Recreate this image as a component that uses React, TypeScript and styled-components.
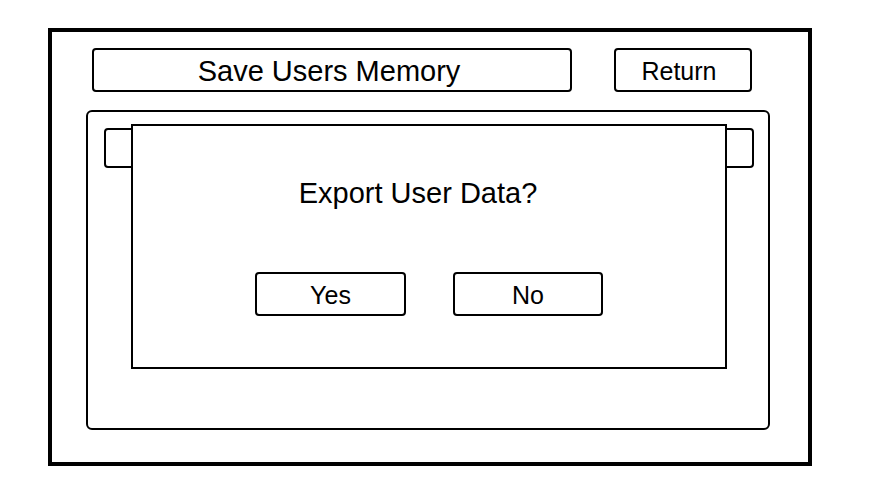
import React from "react"
import styled, { createGlobalStyle } from "styled-components"

const GlobalStyle = createGlobalStyle`
  body {
    margin: 0;
    background: #ffffff;
    font-family: "Liberation Sans", Arial, sans-serif;
    color: #000000;
  }
`

export default function App() {
  return (
    <>
      <GlobalStyle />
      <StyledFrame>
        <StyledHeader>
          <StyledTitleBox>Save Users Memory</StyledTitleBox>
          <StyledButton $width={138} $shift={8}>Return</StyledButton>
        </StyledHeader>
        <StyledPanel>
          <StyledTabRow>
            <StyledTab />
            <StyledTab />
          </StyledTabRow>
          <StyledDialog>
            <StyledQuestion>Export User Data?</StyledQuestion>
            <StyledActions>
              <StyledButton $width={151}>Yes</StyledButton>
              <StyledButton $width={150}>No</StyledButton>
            </StyledActions>
          </StyledDialog>
        </StyledPanel>
      </StyledFrame>
    </>
  )
}

const StyledFrame = styled.div`
  box-sizing: border-box;
  margin: 28px 0 0 48px;
  width: 764px;
  height: 438px;
  border: 4px solid #000;
  padding: 16px 38px 0 34px;
  display: flex;
  flex-direction: column;
  gap: 18px;
`

const StyledHeader = styled.div`
  display: flex;
  align-items: center;
  gap: 42px;
  padding-left: 6px;
`

const StyledTitleBox = styled.div`
  box-sizing: border-box;
  width: 480px;
  height: 44px;
  border: 2px solid #000;
  border-radius: 4px;
  display: flex;
  align-items: center;
  justify-content: center;
  padding-top: 3px;
  padding-right: 6px;
  font-size: 29px;
`

const StyledButton = styled.div<{ $width: number; $shift?: number }>`
  box-sizing: border-box;
  width: ${(p) => p.$width}px;
  height: 44px;
  border: 2px solid #000;
  border-radius: 4px;
  display: flex;
  align-items: center;
  justify-content: center;
  padding-top: 2px;
  padding-right: ${(p) => p.$shift ?? 0}px;
  font-size: 25px;
`

const StyledPanel = styled.div`
  box-sizing: border-box;
  position: relative;
  height: 320px;
  border: 2px solid #000;
  border-radius: 6px;
  padding: 16px 14px 0 16px;
`

const StyledTabRow = styled.div`
  display: flex;
  justify-content: space-between;
`

const StyledTab = styled.div`
  box-sizing: border-box;
  width: 120px;
  height: 40px;
  border: 2px solid #000;
  border-radius: 4px;
`

const StyledDialog = styled.div`
  box-sizing: border-box;
  position: absolute;
  left: 43px;
  top: 12px;
  width: 596px;
  height: 245px;
  background: #fff;
  border: 2px solid #000;
  padding-top: 51px;
  display: flex;
  flex-direction: column;
  align-items: center;
  gap: 62px;
`

const StyledQuestion = styled.div`
  font-size: 29px;
  line-height: 33px;
  margin-right: 22px;
`

const StyledActions = styled.div`
  display: flex;
  gap: 47px;
`
